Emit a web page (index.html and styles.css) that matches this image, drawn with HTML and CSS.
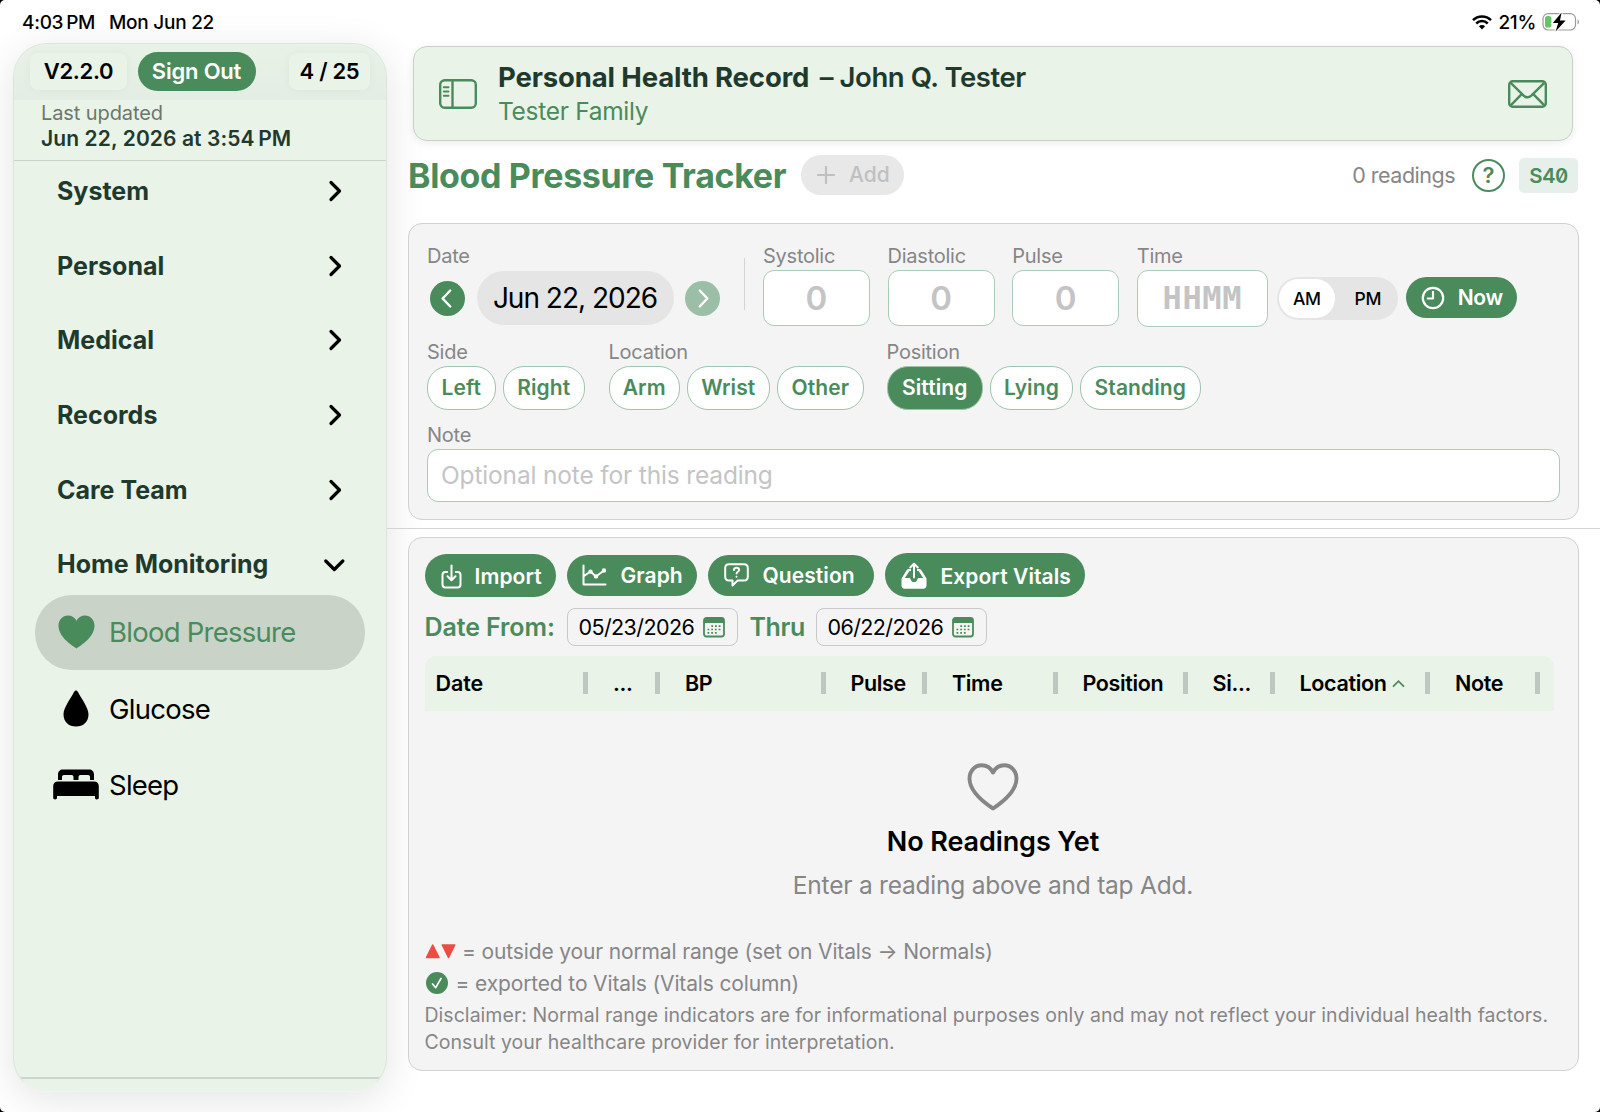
FILE: index.html
```
<!DOCTYPE html>
<html lang="en">
<head>
    <meta charset="UTF-8">
    <title>Blood Pressure Tracker</title>
    <link rel="stylesheet" href="styles.css">
</head>
<body>
<div class="screen">

    <div class="status-bar">
        <span class="clock">4:03&#8201;PM</span>
        <span class="day">Mon Jun 22</span>
        <div class="status-right">
            <svg class="wifi" width="20" height="15" viewBox="0 0 20 15">
                <path d="M1 5.200a12.800 12.800 0 0 1 18 0M4.200 8.500a8.200 8.200 0 0 1 11.600 0" fill="none" stroke="#000" stroke-width="2.500"/>
                <path d="M10 14.400l-3.100-3.100a4.400 4.400 0 0 1 6.200 0z" fill="#000"/>
            </svg>
            <span class="percent">21%</span>
            <svg class="battery" width="38" height="20" viewBox="0 0 38 20">
                <rect x="1" y="1.600" width="32.500" height="16.400" rx="5.200" fill="none" stroke="#9b9b9b" stroke-width="1.200"/>
                <path d="M35.600 7.200c1.600.8 1.600 4.400 0 5.200z" fill="#8a8a8a"/>
                <rect x="3" y="4" width="6.400" height="11.600" rx="2.600" fill="#65c466"/>
                <path d="M19.600.5L10.800 11h5.400l-2.600 8.500L23.600 8.600h-5.600z" fill="#000" stroke="#fff" stroke-width="2.200" paint-order="stroke"/>
            </svg>
        </div>
    </div>

    <div class="sidebar">
        <div class="side-top">
            <span class="chip version">V2.2.0</span>
            <span class="sign-out">Sign Out</span>
            <span class="chip count">4 / 25</span>
        </div>
        <div class="updated">
            <div class="updated-label">Last updated</div>
            <div class="updated-date">Jun 22, 2026 at 3:54&#8201;PM</div>
        </div>
        <div class="nav">
            <div class="nav-row">System<svg class="chev" width="24" height="24" viewBox="0 0 24 24"><path d="M7 3.500l8.500 8.500-8.500 8.500"/></svg></div>
            <div class="nav-row">Personal<svg class="chev" width="24" height="24" viewBox="0 0 24 24"><path d="M7 3.500l8.500 8.500-8.500 8.500"/></svg></div>
            <div class="nav-row">Medical<svg class="chev" width="24" height="24" viewBox="0 0 24 24"><path d="M7 3.500l8.500 8.500-8.500 8.500"/></svg></div>
            <div class="nav-row">Records<svg class="chev" width="24" height="24" viewBox="0 0 24 24"><path d="M7 3.500l8.500 8.500-8.500 8.500"/></svg></div>
            <div class="nav-row">Care Team<svg class="chev" width="24" height="24" viewBox="0 0 24 24"><path d="M7 3.500l8.500 8.500-8.500 8.500"/></svg></div>
            <div class="nav-row home">Home Monitoring<svg class="chev" width="24" height="24" viewBox="0 0 24 24"><path d="M1.800 9l8.500 8.500L18.800 9"/></svg></div>
        </div>
        <div class="subnav">
            <div class="sub-row active">
                <span class="sub-icon"><svg width="37" height="34" viewBox="0 0 37 34"><path d="M18.500 33.500C14 30.500.5 22 .5 10.800.5 5 4.500.5 10 .5c3.800 0 6.800 2 8.500 5.200C20.200 2.500 23.200.5 27 .5c5.500 0 9.500 4.500 9.500 10.300C36.500 22 23 30.500 18.500 33.500z" fill="#4a8b5c"/></svg></span>
                Blood Pressure
            </div>
            <div class="sub-row glucose">
                <span class="sub-icon"><svg width="26" height="37" viewBox="0 0 26 37"><path d="M13 .5c.8 0 1.500.6 2 1.500C18.500 9 25.500 17.500 25.500 24.500 25.500 31.800 20.300 36.500 13 36.500S.5 31.800.5 24.500C.5 17.500 7.500 9 11 2c.5-.9 1.200-1.500 2-1.500z"/></svg></span>
                Glucose
            </div>
            <div class="sub-row">
                <span class="sub-icon"><svg width="46" height="31" viewBox="0 0 46 31"><path d="M5 11V5.500C5 2.500 7 .5 10 .5h26c3 0 5 2 5 5V11h-4V8c0-1.200-.8-2-2-2h-7.500c-1.200 0-2 .8-2 2v3h-5V8c0-1.200-.8-2-2-2H11c-1.200 0-2 .8-2 2v3z"/><path d="M5 12.500h36c3 0 4.800 1.800 4.800 4.800v11.500c0 2.200-3.800 2.200-3.800 0V27H4v1.800c0 2.200-3.800 2.200-3.800 0V17.300c0-3 1.800-4.800 4.800-4.800z"/></svg></span>
                Sleep
            </div>
        </div>
        <div class="side-foot"></div>
    </div>

    <div class="main">
        <div class="banner">
            <svg class="panel-icon" width="38" height="30" viewBox="0 0 38 30" fill="none" stroke="#4a8b5c" stroke-width="2.400">
                <rect x="1.200" y="1.200" width="35.600" height="27.600" rx="4.500"/>
                <path d="M13.500 1v28"/>
                <path d="M4.800 8.300h4.700M4.800 12.500h4.700M4.800 16.700h4.700" stroke-width="1.900" stroke-linecap="round"/>
            </svg>
            <div>
                <div class="banner-title"><b>Personal Health Record</b> <span>– John Q. Tester</span></div>
                <div class="banner-sub">Tester Family</div>
            </div>
            <svg class="mail-icon" width="39" height="28" viewBox="0 0 39 28" fill="none" stroke="#4a8b5c" stroke-width="2.400">
                <rect x="1.200" y="1.200" width="36.600" height="25.600" rx="3.500"/>
                <path d="M2.200 2.400l13.500 13.200c2.500 2.300 5.100 2.300 7.600 0l13.500-13.200M2.200 25.800l11.500-11.600M36.800 25.800L25.300 14.200"/>
            </svg>
        </div>

        <div class="heading">
            <h1>Blood Pressure Tracker</h1>
            <span class="add"><svg width="18" height="18" viewBox="0 0 18 18"><path d="M9 1v16M1 9h16" stroke="#c0c0c1" stroke-width="2.200" stroke-linecap="round"/></svg>Add</span>
            <span class="readings">0 readings</span>
            <span class="help">?</span>
            <span class="code">S40</span>
        </div>

        <div class="card entry">
            <div class="row-one">
                <div class="field date-field">
                    <label>Date</label>
                    <div class="date-pick">
                        <span class="round"><svg width="35" height="35" viewBox="0 0 36 36"><path d="M20.800 9.800L13 18l7.800 8.200"/></svg></span>
                        <span class="date-pill">Jun 22, 2026</span>
                        <span class="round dim"><svg width="35" height="35" viewBox="0 0 36 36"><path d="M15.200 9.800L23 18l-7.800 8.200"/></svg></span>
                    </div>
                </div>
                <div class="divider"></div>
                <div class="field num"><label>Systolic</label><div class="box">0</div></div>
                <div class="field num"><label>Diastolic</label><div class="box">0</div></div>
                <div class="field num"><label>Pulse</label><div class="box">0</div></div>
                <div class="field time"><label>Time</label><div class="box mono">HHMM</div></div>
                <div class="ampm"><span class="on">AM</span><span>PM</span></div>
                <div class="now">
                    <svg width="24" height="24" viewBox="0 0 24 24" fill="none" stroke="#fff" stroke-width="2.200" stroke-linecap="round" stroke-linejoin="round"><circle cx="12" cy="12" r="10.200"/><path d="M12 5.800V12.500H6.800"/></svg>
                    Now
                </div>
            </div>

            <div class="row-two">
                <div class="group side"><label>Side</label><div class="opts"><span class="w-left">Left</span><span class="w-right">Right</span></div></div>
                <div class="group location"><label>Location</label><div class="opts"><span class="w-arm">Arm</span><span class="w-wrist">Wrist</span><span class="w-other">Other</span></div></div>
                <div class="group"><label>Position</label><div class="opts"><span class="w-sitting picked">Sitting</span><span class="w-lying">Lying</span><span class="w-standing">Standing</span></div></div>
            </div>

            <label class="note-label">Note</label>
            <div class="note">Optional note for this reading</div>
        </div>

        <div class="split"></div>

        <div class="card log">
            <div class="actions">
                <span class="btn import">
                    <svg width="21" height="25" viewBox="0 0 21 25" fill="none" stroke="#fff" stroke-width="2" stroke-linecap="round" stroke-linejoin="round"><path d="M6.200 8H4.500C2.500 8 1.500 9 1.500 11v9.500c0 2 1 3 3 3h12c2 0 3-1 3-3V11c0-2-1-3-3-3h-1.700M10.500 1.500v14.300M6.500 12.200l4 4 4-4"/></svg>
                    Import
                </span>
                <span class="btn graph">
                    <svg width="25" height="22" viewBox="0 0 25 22" fill="none" stroke="#fff" stroke-width="2" stroke-linecap="round" stroke-linejoin="round"><path d="M1.500 1.500v19h22M2 12l6.500-4.500 5.500 5L22 6.500"/><circle cx="8.500" cy="7.600" r="1.200" fill="#fff"/><circle cx="14" cy="12.400" r="1.200" fill="#fff"/><circle cx="22" cy="6.500" r="1.200" fill="#fff"/></svg>
                    Graph
                </span>
                <span class="btn question">
                    <svg width="25" height="24" viewBox="0 0 25 24" fill="none" stroke="#fff" stroke-width="2" stroke-linecap="round" stroke-linejoin="round"><path d="M5 1.200h15c2.500 0 3.800 1.300 3.800 3.800v8.800c0 2.500-1.300 3.800-3.800 3.800h-6.500L8.500 22.500v-4.900H5c-2.500 0-3.800-1.300-3.800-3.800V5C1.200 2.500 2.500 1.200 5 1.200z"/><path d="M9.900 7c.2-1.500 1.200-2.200 2.600-2.200 1.500 0 2.600.8 2.600 2.100 0 1.800-2.500 1.800-2.500 3.600M12.500 13.700v.1"/></svg>
                    Question
                </span>
                <span class="btn export">
                    <svg width="26" height="28" viewBox="0 0 26 28"><path d="M.5 16.500l4.800-7.800C5.900 7.600 6.800 7 8 7h2v2H8.500L3.800 16H8c1 0 1.500.6 1.700 1.500.4 1.600 1.600 2.600 3.300 2.600s2.900-1 3.300-2.600c.2-.9.7-1.500 1.700-1.500h4.200L17.500 9H16V7h2c1.200 0 2.100.6 2.700 1.700l4.800 7.800v7c0 2-1.200 3.200-3.200 3.200H3.700c-2 0-3.200-1.200-3.200-3.200z" fill="#fff"/><path d="M13 15.500V2M9.200 5.500L13 1.700l3.800 3.800" fill="none" stroke="#fff" stroke-width="2" stroke-linecap="round" stroke-linejoin="round"/></svg>
                    Export Vitals
                </span>
            </div>

            <div class="range">
                <span class="range-label from">Date From:</span>
                <span class="date-input">05/23/2026
                    <svg width="22" height="21" viewBox="0 0 22 21"><rect x="1" y="1" width="20" height="18.500" rx="2.500" fill="none" stroke="#4a8b5c" stroke-width="1.800"/><path d="M1 6V3.500C1 2 2 1 3.500 1h15C20 1 21 2 21 3.500V6z" fill="#4a8b5c"/><path d="M8.300 9.200h10M4.500 12.500h13.500M4.500 15.800h9.500" stroke="#4a8b5c" stroke-width="1.700" stroke-dasharray="1.800 1.900"/></svg>
                </span>
                <span class="range-label thru">Thru</span>
                <span class="date-input">06/22/2026
                    <svg width="22" height="21" viewBox="0 0 22 21"><rect x="1" y="1" width="20" height="18.500" rx="2.500" fill="none" stroke="#4a8b5c" stroke-width="1.800"/><path d="M1 6V3.500C1 2 2 1 3.500 1h15C20 1 21 2 21 3.500V6z" fill="#4a8b5c"/><path d="M8.300 9.200h10M4.500 12.500h13.500M4.500 15.800h9.500" stroke="#4a8b5c" stroke-width="1.700" stroke-dasharray="1.800 1.900"/></svg>
                </span>
            </div>

            <div class="thead">
                <span class="first">Date</span>
                <span>...</span>
                <span>BP</span>
                <span>Pulse</span>
                <span>Time</span>
                <span>Position</span>
                <span>Si...</span>
                <span>Location<svg width="13" height="9" viewBox="0 0 13 9"><path d="M1.500 7.200l5-5 5 5" fill="none" stroke="#4a8b5c" stroke-width="1.800" stroke-linecap="round"/></svg></span>
                <span>Note</span>
            </div>

            <div class="empty">
                <svg width="52" height="48" viewBox="0 0 52 48"><path d="M26 45.500C20 41.500 2.500 30 2.500 15.500 2.500 8 7.800 2.300 14.800 2.300c5 0 8.800 2.600 11.200 7.200 2.400-4.600 6.200-7.200 11.200-7.200 7 0 12.300 5.700 12.300 13.200C49.500 30 32 41.500 26 45.500z" fill="none" stroke="#868687" stroke-width="3.900" stroke-linejoin="round"/></svg>
                <div class="empty-title">No Readings Yet</div>
                <div class="empty-text">Enter a reading above and tap Add.</div>
            </div>

            <div class="legend range-note">
                <svg width="31" height="15" viewBox="0 0 31 15"><path d="M7.700 1L14 13.500H1.500zM17.300 1h12.500L23.500 13.500z" fill="#eb4d45" stroke="#eb4d45" stroke-width="1.500" stroke-linejoin="round"/></svg>
                = outside your normal range (set on Vitals → Normals)
            </div>
            <div class="legend export-note">
                <svg width="22" height="22" viewBox="0 0 22 22"><circle cx="11" cy="11" r="11" fill="#4a8b5c"/><path d="M6.500 12l3.200 3.700L15 6.500" fill="none" stroke="#fff" stroke-width="1.700" stroke-linecap="round" stroke-linejoin="round"/></svg>
                = exported to Vitals (Vitals column)
            </div>
            <div class="disclaimer">Disclaimer: Normal range indicators are for informational purposes only and may not reflect your individual health factors.<br>Consult your healthcare provider for interpretation.</div>
        </div>
    </div>
</div>
</body>
</html>
```

FILE: styles.css
```
* {
    box-sizing: border-box;
}

html {
    background: #000;
}

body {
    margin: 0;
    font-family: Inter, "Liberation Sans", sans-serif;
    color: #000;
}

svg {
    display: block;
    flex: none;
}

.screen {
    width: 1600px;
    height: 1112px;
    display: grid;
    grid-template-columns: 387px 1213px;
    grid-template-rows: 43px 1069px;
    background: #fff;
    border-radius: 5px;
    overflow: hidden;
    white-space: nowrap;
}

/* status bar */
.status-bar {
    grid-column: 1 / 3;
    display: flex;
    align-items: center;
    height: 43px;
    padding: 1px 20px 0 22px;
    font-size: 19px;
    font-weight: 500;
    letter-spacing: -0.3px;
    position: relative;
    z-index: 1;
}

.clock {
    width: 87px;
}

.day {
    letter-spacing: -0.25px;
}

.status-right {
    display: flex;
    align-items: center;
    margin-left: auto;
}

.percent {
    margin: 0 6px;
    letter-spacing: -0.3px;
}

/* sidebar */
.sidebar {
    width: 374px;
    height: 1049px;
    margin-left: 13px;
    display: flex;
    flex-direction: column;
    background: #e9f3e8;
    border: 1px solid #dae6dc;
    border-bottom-color: #eef5ee;
    border-radius: 34px;
    box-shadow: 0 8px 40px rgba(0, 0, 0, 0.11);
    overflow: hidden;
}

.side-top {
    display: flex;
    align-items: center;
    height: 56px;
    padding: 0 16px 2px 16px;
    background: linear-gradient(#e8f2e7, #e3ede3);
}

.chip {
    height: 37px;
    line-height: 37px;
    border-radius: 8px;
    background: #e9f3e8;
    box-shadow: 0 0 10px rgba(0, 0, 0, 0.04);
    font-size: 22px;
    font-weight: 600;
    letter-spacing: -0.3px;
    text-align: center;
}

.version {
    width: 97px;
}

.count {
    width: 81px;
    margin-left: auto;
}

.sign-out {
    width: 118px;
    height: 39px;
    line-height: 39px;
    margin-left: 10.500px;
    border-radius: 20px;
    background: #4a8b5c;
    color: #fff;
    font-size: 22px;
    font-weight: 600;
    letter-spacing: -0.2px;
    text-align: center;
}

.updated {
    height: 61px;
    padding: 0 0 0 27px;
    border-bottom: 1px solid #c8d5ca;
    line-height: 26px;
}

.updated-label {
    margin-top: -0.500px;
    color: #6c776e;
    font-size: 20px;
    letter-spacing: -0.1px;
}

.updated-date {
    color: #1f3a2d;
    font-size: 21px;
    font-weight: 600;
    letter-spacing: 0.1px;
}

.nav-row {
    display: flex;
    align-items: center;
    justify-content: space-between;
    height: 74.600px;
    padding: 0 38px 0 43px;
    color: #1f3a2d;
    font-size: 25px;
    font-weight: 700;
    letter-spacing: 0;
}

.nav {
    margin-top: -7px;
}

.chev path {
    fill: none;
    stroke: #000;
    stroke-width: 3.200px;
    stroke-linecap: round;
    stroke-linejoin: round;
}

.subnav {
    margin: -7px 21px 0;
}

.sub-row {
    display: flex;
    align-items: center;
    height: 76px;
    padding-left: 18px;
    font-size: 27.500px;
    letter-spacing: -0.75px;
}

.sub-icon {
    display: flex;
    justify-content: center;
    width: 46px;
    margin-right: 10px;
}

.active {
    height: 75px;
    border-radius: 37px;
    background: #c9d3c8;
    color: #4a8b5c;
}

.glucose {
    margin-top: 1px;
}

.side-foot {
    height: 14px;
    margin-top: auto;
    border-top: 2px solid #cad8cd;
}

/* main column */
.main {
    min-width: 0;
}

.banner {
    display: flex;
    align-items: center;
    height: 95px;
    margin: 3px 27px 0 26px;
    padding: 0 25px;
    background: #e9f3e8;
    border: 1px solid #c9cfca;
    border-radius: 14px;
    box-shadow: 0 2px 8px rgba(0, 0, 0, 0.08);
    color: #1f3a2d;
}

.panel-icon {
    margin-right: 21px;
}

.mail-icon {
    margin-left: auto;
}

.banner-title {
    font-size: 27.500px;
    line-height: 34px;
    letter-spacing: -0.14px;
}

.banner-title span {
    margin-left: 3px;
    font-weight: 600;
    letter-spacing: -0.45px;
}

.banner-sub {
    color: #4a8b5c;
    font-size: 24.500px;
    line-height: 34px;
    letter-spacing: -0.3px;
}

.heading {
    display: flex;
    align-items: center;
    height: 82px;
    margin: 0 22px 0 21px;
    padding-bottom: 13px;
}

h1 {
    width: 393px;
    margin: 0;
    color: #4a8b5c;
    font-size: 34px;
    font-weight: 700;
    letter-spacing: -0.34px;
}

.add {
    display: flex;
    align-items: center;
    gap: 14px;
    width: 103px;
    height: 40px;
    margin-bottom: 2px;
    padding-left: 16px;
    border-radius: 20px;
    background: #e8e8e8;
    color: #c0c0c1;
    font-size: 21px;
    font-weight: 500;
}

.readings {
    margin: 0 0 2px auto;
    color: #868687;
    font-size: 21.500px;
    letter-spacing: -0.5px;
}

.help {
    width: 33px;
    height: 33px;
    margin: 0 14px 0 17px;
    border: 2.500px solid #4a8b5c;
    border-radius: 50%;
    color: #4a8b5c;
    font-size: 22px;
    font-weight: 600;
    line-height: 28px;
    text-align: center;
}

.code {
    width: 59px;
    height: 35px;
    border-radius: 5px;
    background: #e6efe9;
    color: #4a8b5c;
    font-size: 20.500px;
    font-weight: 600;
    font-feature-settings: "zero", "tnum";
    line-height: 36px;
    letter-spacing: -0.5px;
    text-align: center;
}

.card {
    margin: 0 21px;
    background: #f4f4f4;
    border: 1px solid #d1d1d2;
    border-radius: 14px;
}

label {
    display: block;
    color: #868687;
    font-size: 20px;
    line-height: 24px;
    letter-spacing: -0.25px;
}

/* entry form */
.entry {
    height: 297px;
    padding: 20px 18px 0;
}

.row-one {
    display: flex;
    height: 86px;
}

.date-field {
    width: 318px;
}

.date-pick {
    display: flex;
    align-items: center;
    height: 54px;
    margin-top: 3px;
    padding-left: 3px;
}

.round {
    width: 35px;
    height: 35px;
    border-radius: 50%;
    background: #4a8b5c;
}

.round path {
    fill: none;
    stroke: #fff;
    stroke-width: 2.500px;
    stroke-linecap: round;
    stroke-linejoin: round;
}

.dim {
    background: #9bbfa6;
}

.date-pill {
    width: 197px;
    height: 54px;
    margin: 0 11.500px;
    border-radius: 27px;
    background: #e5e5e5;
    font-size: 28px;
    line-height: 54px;
    letter-spacing: -1px;
    text-align: center;
}

.divider {
    width: 1px;
    height: 52px;
    margin: 14px 18px 0 -1px;
    background: #d4d4d5;
}

.box {
    height: 56px;
    margin-top: 1.500px;
    border: 1px solid #abcdb5;
    border-radius: 11px;
    background: #fff;
    color: #c4c4c6;
    font-size: 33px;
    font-weight: 600;
    line-height: 55px;
    text-align: center;
}

.num {
    width: 107px;
    margin-right: 17.600px;
}

.time {
    width: 131px;
}

.mono {
    height: 57px;
    font-family: "DejaVu Sans Mono", monospace;
    font-size: 32px;
    font-weight: 700;
    letter-spacing: 0.6px;
}

.ampm {
    display: flex;
    width: 121px;
    height: 43px;
    margin: 32.500px 8px 0 9px;
    padding: 2px;
    border-radius: 22px;
    background: #e5e5e5;
    font-size: 17.500px;
    font-weight: 500;
    letter-spacing: -0.3px;
}

.ampm span {
    width: 56px;
    height: 39px;
    line-height: 39px;
    text-align: center;
}

.ampm span + span {
    margin-left: 5px;
}

.ampm .on {
    border-radius: 20px;
    background: #fff;
}

.now {
    display: flex;
    align-items: center;
    gap: 13px;
    width: 111px;
    height: 41px;
    margin-top: 33px;
    padding-left: 15px;
    border-radius: 21px;
    background: #4a8b5c;
    color: #fff;
    font-size: 21px;
    font-weight: 600;
    letter-spacing: -0.4px;
}

.row-two {
    display: flex;
    margin-top: 10px;
}

.side {
    width: 181.500px;
}

.location {
    width: 278px;
}

.opts {
    display: flex;
    gap: 7px;
    margin-top: 2px;
}

.opts span {
    height: 44px;
    border: 1px solid #9fc5aa;
    border-radius: 21px;
    background: #fff;
    color: #4a8b5c;
    font-size: 21px;
    font-weight: 600;
    line-height: 41px;
    letter-spacing: 0.1px;
    text-align: center;
}

.opts .picked {
    background: #4a8b5c;
    color: #fff;
}

.w-left { width: 68.500px; }
.w-right { width: 82.500px; }
.w-arm { width: 71.500px; }
.w-wrist { width: 82.500px; }
.w-other { width: 87.500px; }
.w-sitting { width: 96.500px; }
.w-lying { width: 83px; }
.w-standing { width: 120.500px; }

.note-label {
    margin-top: 13px;
}

.note {
    height: 53px;
    margin-top: 2px;
    padding-left: 13px;
    border: 1px solid #abcdb5;
    border-radius: 11px;
    background: #fff;
    color: #c4c4c6;
    font-size: 24.500px;
    line-height: 50px;
    letter-spacing: -0.16px;
}

.split {
    height: 1px;
    margin: 8px 0;
    background: #d4d4d5;
}

/* readings log */
.log {
    height: 534px;
    padding: 14px 15.500px 0;
}

.actions {
    display: flex;
    align-items: center;
    gap: 11px;
    height: 46px;
}

.btn {
    display: flex;
    align-items: center;
    height: 41px;
    border-radius: 22px;
    background: #4a8b5c;
    color: #fff;
    font-size: 21px;
    font-weight: 600;
    letter-spacing: 0.08px;
}

.import {
    width: 131px;
    height: 43px;
    padding: 2px 0 0 16px;
    gap: 13px;
}

.graph {
    width: 130px;
    padding-left: 15px;
    gap: 14px;
}

.question {
    width: 166px;
    padding-left: 16px;
    gap: 14px;
}

.export {
    width: 200px;
    height: 44px;
    padding: 2px 0 0 16px;
    gap: 14px;
}

.range {
    display: flex;
    align-items: center;
    height: 38px;
    margin-top: 10px;
}

.range-label {
    color: #4a8b5c;
    font-size: 25px;
    font-weight: 600;
    letter-spacing: -0.1px;
}

.from {
    width: 142px;
}

.thru {
    width: 78px;
    padding-left: 12px;
    letter-spacing: -0.4px;
}

.date-input {
    display: flex;
    align-items: center;
    justify-content: space-between;
    width: 171px;
    height: 38px;
    padding: 0 12px 0 11px;
    border: 1px solid #c9c9ca;
    border-radius: 8px;
    font-size: 21.500px;
    letter-spacing: -0.6px;
}

.thead {
    display: grid;
    grid-template-columns: 163.500px 72px 165.500px 101.500px 130.500px 130px 87px 155.500px 110px;
    height: 55px;
    width: 1129.500px;
    margin-top: 10px;
    padding-bottom: 1px;
    border-radius: 11px 11px 0 0;
    background: #e9f3e8;
    align-items: center;
    font-size: 21.500px;
    font-weight: 600;
    letter-spacing: -0.35px;
}

.thead span {
    display: flex;
    align-items: center;
    gap: 5px;
    height: 22px;
    padding-left: 25px;
    border-right: 5.500px solid #c0c6c1;
}

.thead .first {
    padding-left: 11px;
    letter-spacing: -0.1px;
}

.empty {
    display: flex;
    flex-direction: column;
    align-items: center;
    height: 224px;
    padding: 52px 1px 0 0;
}

.empty-title {
    margin-top: 13px;
    font-size: 27px;
    font-weight: 600;
    line-height: 36px;
    letter-spacing: -0.1px;
}

.empty-text {
    margin-top: 8px;
    color: #868687;
    font-size: 24.500px;
    line-height: 34px;
    letter-spacing: -0.22px;
}

.legend {
    display: flex;
    align-items: center;
    height: 32px;
    color: #868687;
    font-size: 21px;
    letter-spacing: -0.14px;
}

.range-note {
    gap: 6.500px;
}

.export-note {
    gap: 7.500px;
    padding-left: 1.500px;
}

.disclaimer {
    margin-top: 3px;
    color: #868687;
    font-size: 19.500px;
    line-height: 27px;
    letter-spacing: 0.035px;
}
```
